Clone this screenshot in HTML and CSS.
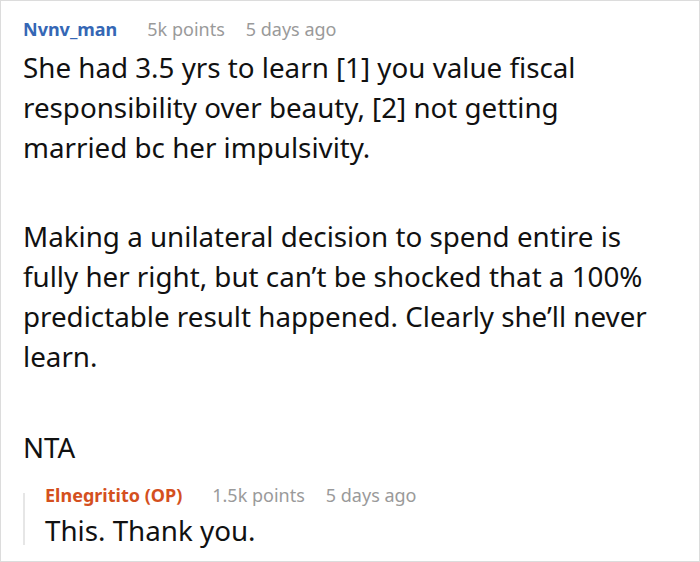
FILE: index.html
```html
<!DOCTYPE html>
<html>
<head>
<meta charset="utf-8">
<link rel="stylesheet" href="styles.css">
</head>
<body>
<div class="comment">
  <div class="meta">
    <span class="user">Nvnv_man</span>
    <span class="info">5k points</span>
    <span class="info">5 days ago</span>
  </div>
  <div class="body">
    <p class="para p1">She had 3.5 yrs to learn [1] you value fiscal responsibility over beauty, [2] not getting married bc her impulsivity.</p>
    <p class="para p2">Making a unilateral decision to spend entire is fully her right, but can’t be shocked that a 100% predictable result happened. Clearly she’ll never learn.</p>
    <p class="para p3">NTA</p>
  </div>
  <div class="reply">
    <div class="reply-bar"></div>
    <div class="reply-content">
      <div class="meta">
        <span class="user op">Elnegritito (OP)</span>
        <span class="info">1.5k points</span>
        <span class="info">5 days ago</span>
      </div>
      <p class="para reply-text">This. Thank you.</p>
    </div>
  </div>
</div>
</body>
</html>
```
FILE: styles.css
```css
html, body {
  margin: 0;
  padding: 0;
  background: #fff;
}
body {
  font-family: "Noto Sans", "Open Sans", sans-serif;
  color: #111;
}
.comment {
  box-sizing: border-box;
  width: 700px;
  height: 562px;
  border: 1px solid #dcdcdc;
  padding: 16px 45px 0 22px;
  overflow: hidden;
}
.meta {
  display: flex;
  align-items: baseline;
  font-size: 18px;
  line-height: 24px;
  height: 24px;
  white-space: nowrap;
}
.user {
  font-weight: 700;
  color: #3567b5;
  margin-right: 30px;
}
.user.op {
  color: #d4501e;
}
.info {
  color: #9a9a9a;
  margin-right: 21px;
}
.body {
  margin-top: 6px;
}
.para {
  margin: 0;
  font-size: 27.75px;
  line-height: 40px;
}
.p1 {
  margin-bottom: 49px;
}
.p2 {
  margin-bottom: 51px;
}
.reply {
  display: flex;
  margin-top: 16px;
}
.reply-bar {
  width: 2px;
  background: #e6e6e6;
  margin: 10px 20px 5px 0;
}
.reply-text {
  margin-top: 3px;
}
```
